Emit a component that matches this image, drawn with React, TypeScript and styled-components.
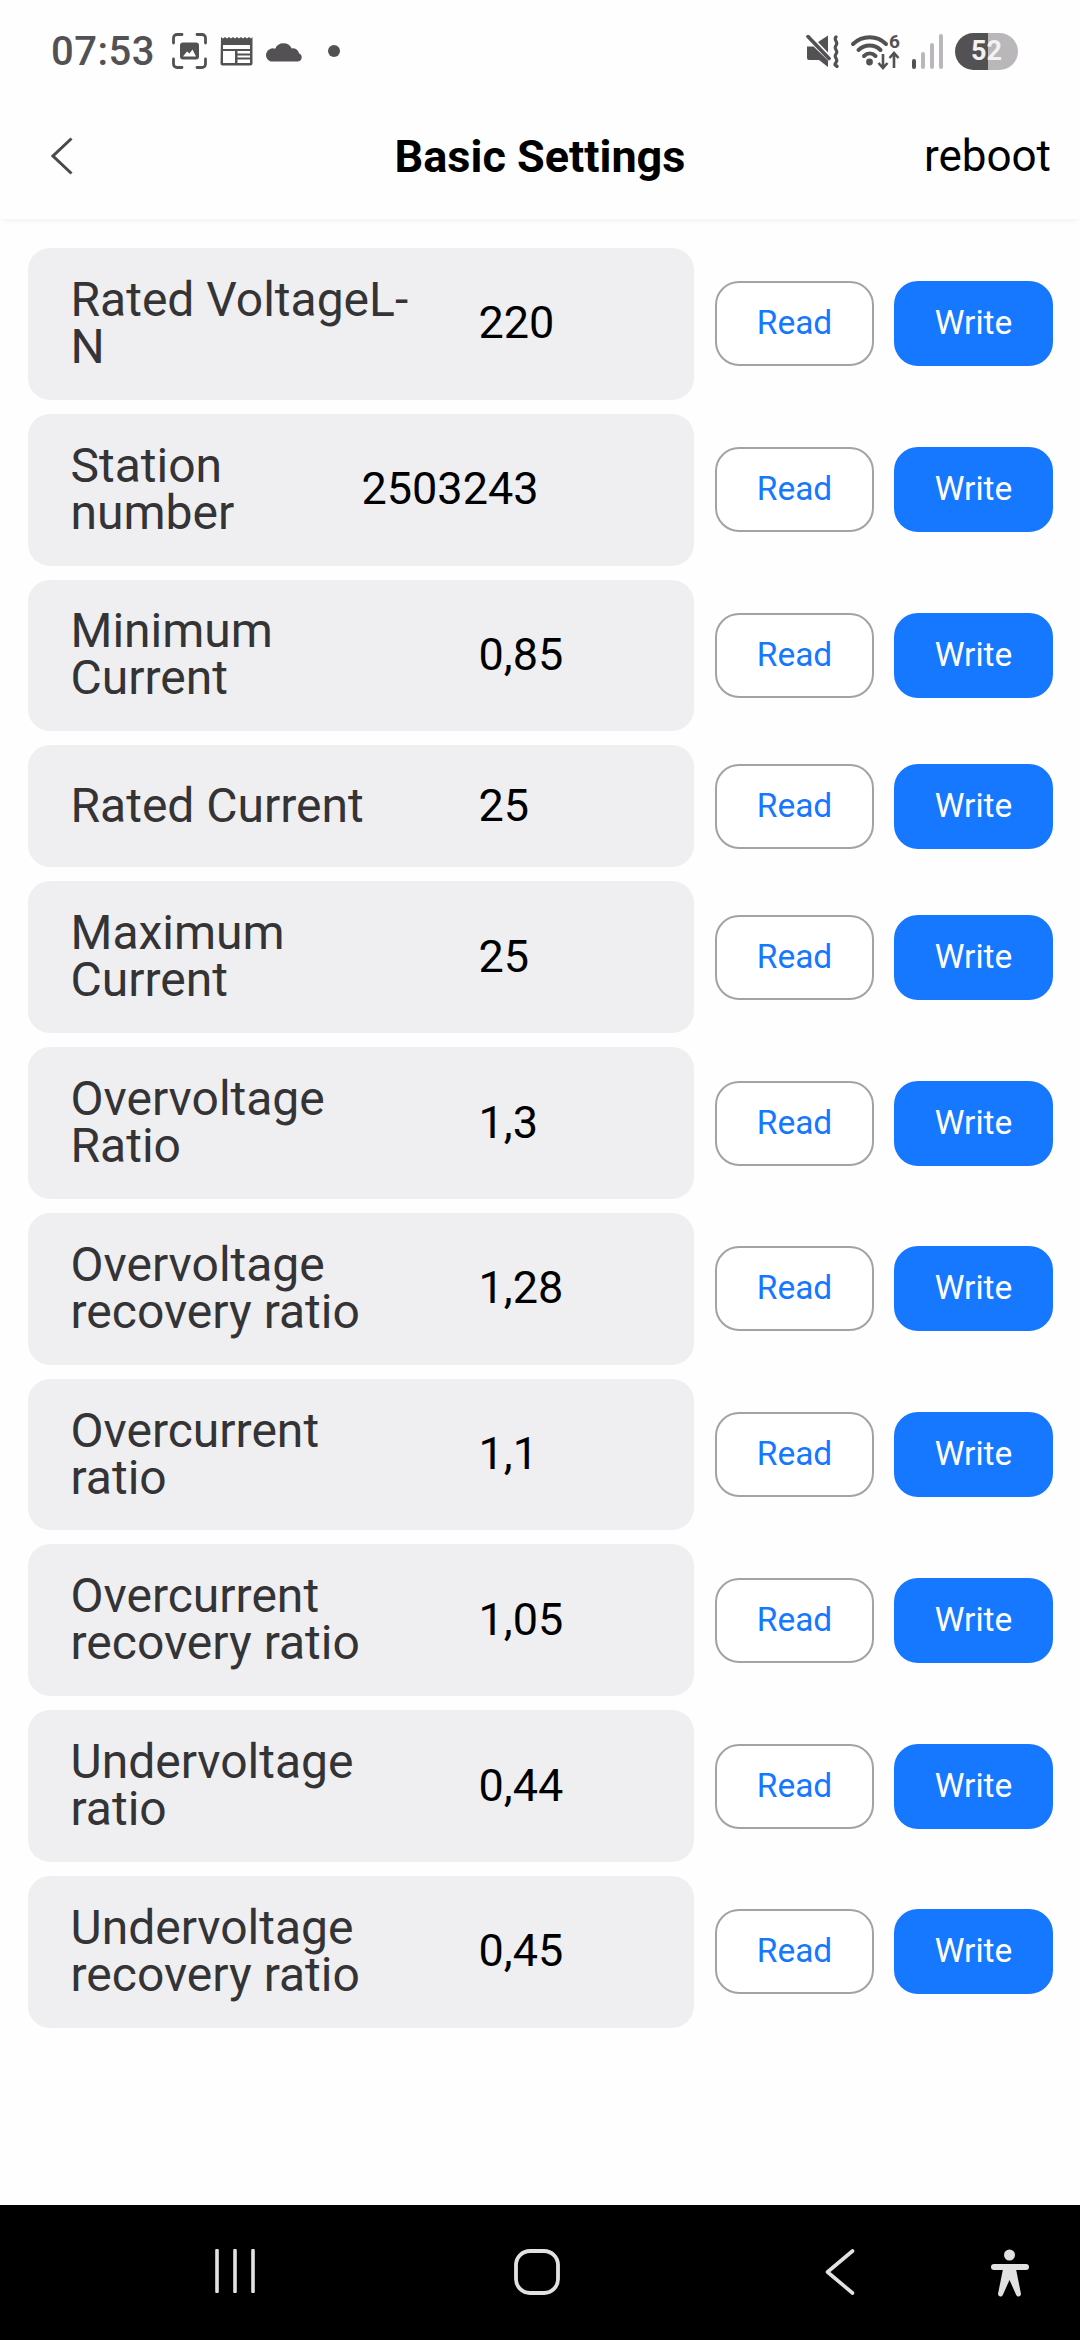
import React from "react";
import styled, { createGlobalStyle } from "styled-components";

const Global = createGlobalStyle`
  html, body { margin: 0; padding: 0; background: #fefefe; }
  * { box-sizing: border-box; }
  body { font-family: Roboto, "Noto Sans", sans-serif; }
`;

const Screen = styled.div`
  width: 1080px;
  height: 2340px;
  display: flex;
  flex-direction: column;
  background: #fefefe;
  overflow: hidden;
`;

const StatusBar = styled.div`
  height: 102px;
  flex: none;
  padding: 0 62px 0 51px;
  display: flex;
  align-items: center;
  justify-content: space-between;
  color: #535154;
`;

const StatusGroup = styled.div`
  display: flex;
  align-items: center;
`;

const Clock = styled.span`
  font-size: 40px;
  font-weight: 500;
  letter-spacing: 0.5px;
  margin-right: 17px;
`;

const Battery = styled.div`
  width: 63px;
  height: 37px;
  border-radius: 19px;
  margin-left: 12px;
  background: linear-gradient(90deg, #535154 0 33px, #b9b7ba 33px);
  color: #f2f2f2;
  font-size: 27px;
  font-weight: 700;
  line-height: 37px;
  text-align: center;
`;

const Header = styled.header`
  height: 117px;
  flex: none;
  padding: 0 29px 9px;
  display: grid;
  grid-template-columns: 1fr auto 1fr;
  align-items: center;
  background: #fefefe;
  box-shadow: 0 4px 5px -2px rgba(0, 0, 0, 0.05);
  position: relative;
`;

const BackButton = styled.div`
  display: flex;
  align-items: center;
  padding-left: 22px;
`;

const Title = styled.h1`
  margin: 0;
  font-size: 45px;
  font-weight: 700;
  color: #000;
`;

const Reboot = styled.div`
  justify-self: end;
  font-size: 44px;
  color: #000;
`;

const List = styled.main`
  flex: 1;
  padding: 29px 27px 0 28px;
  display: flex;
  flex-direction: column;
  gap: 14px;
`;

const Row = styled.div`
  display: flex;
  align-items: center;
  gap: 21px;
`;

const Field = styled.div`
  flex: none;
  width: 666px;
  min-height: 122px;
  padding: 27.9px 0 29.9px 42.5px;
  border-radius: 22px;
  background: #efeef0;
  display: flex;
  align-items: center;
`;

const Label = styled.div<{ $width: number }>`
  flex: none;
  width: ${(p) => p.$width}px;
  padding-right: ${(p) => (p.$width > 300 ? 68 : 0)}px;
  font-size: 48px;
  line-height: 47px;
  color: #343335;
`;

const Value = styled.div`
  font-size: 45px;
  line-height: 47px;
  color: #000;
`;

const Actions = styled.div`
  display: flex;
  gap: 20px;
`;

const Action = styled.button<{ $primary?: boolean }>`
  width: 159px;
  height: 85px;
  padding: 0 0 2px;
  border-radius: 24px;
  border: 2px solid ${(p) => (p.$primary ? "#1677ff" : "#a3a3a3")};
  background: ${(p) => (p.$primary ? "#1677ff" : "#fff")};
  color: ${(p) => (p.$primary ? "#fff" : "#1677ff")};
  font-family: Roboto, sans-serif;
  font-size: 33.5px;
`;

const NavBar = styled.nav`
  height: 135px;
  flex: none;
  background: #000;
  padding-top: 44px;
  display: flex;
  align-items: flex-start;
  color: #e2e2e2;
`;

const NavSlot = styled.div<{ $left: number }>`
  margin-left: ${(p) => p.$left}px;
  display: flex;
`;

const rows = [
  ["Rated VoltageL-N", "220"],
  ["Station number", "2503243", 291],
  ["Minimum Current", "0,85"],
  ["Rated Current", "25"],
  ["Maximum Current", "25"],
  ["Overvoltage Ratio", "1,3"],
  ["Overvoltage recovery ratio", "1,28"],
  ["Overcurrent ratio", "1,1"],
  ["Overcurrent recovery ratio", "1,05"],
  ["Undervoltage ratio", "0,44"],
  ["Undervoltage recovery ratio", "0,45"],
] as [string, string, number?][];

const ScanIcon = () => (
  <svg width="35" height="36" viewBox="0 0 35 36" fill="none" style={{ marginRight: 13 }}>
    <path d="M1.500 10V5a3.500 3.500 0 0 1 3.500-3.500h5M25 1.500h5A3.500 3.500 0 0 1 33.500 5v5M33.500 26v5a3.500 3.500 0 0 1-3.500 3.500h-5M10 34.500H5A3.500 3.500 0 0 1 1.500 31v-5" stroke="currentColor" strokeWidth="2.800" strokeLinecap="round" />
    <rect x="8" y="9.500" width="19" height="17" rx="3" fill="currentColor" />
    <path d="M11 23.500l4-5 2.500 2 3-4 3.500 7z" fill="#fff" />
  </svg>
);

const CalendarIcon = () => (
  <svg width="33" height="30" viewBox="0 0 33 30" style={{ marginRight: 13 }}>
    <path fillRule="evenodd" fill="currentColor" d="M1 1l2 1.500L5 1l2 1.500L9 1l2 1.500L13 1l2 1.500L17 1l2 1.500L21 1l2 1.500L25 1l2 1.500L29 1l2 1.500L32.500 1v26.500a2 2 0 0 1-2 2h-28a2 2 0 0 1-2-2zM3 9v4h27V9zM3 15v12h12V15zM17.500 15v2.500H30V15zM17.500 19.500v2H30v-2zM17.500 23.500V27H30v-3.500z" />
  </svg>
);

const CloudIcon = () => (
  <svg width="36" height="22" viewBox="0 0 36 22" style={{ marginRight: 26 }}>
    <path fill="currentColor" d="M4.500 21.500h27a4.300 4.300 0 0 0 1.500-8.300 6.200 6.200 0 0 0-7.300-4.700A9 9 0 0 0 9.200 8.700 6.800 6.800 0 0 0 4.500 21.500z" />
  </svg>
);

const Dot = styled.span`
  width: 12px;
  height: 12px;
  border-radius: 50%;
  background: currentColor;
`;

const MuteIcon = () => (
  <svg width="35" height="33" viewBox="0 0 35 33" style={{ marginRight: 10 }}>
    <path fill="currentColor" d="M1 11.500h6.500L22 25.500V32l-9-7H3a2 2 0 0 1-2-2zM12 7l10-6.500v17z" />
    <path d="M2 1.500l21 22" stroke="currentColor" strokeWidth="3.600" strokeLinecap="round" />
    <path d="M30 2c-3 3 3 5 0 8.500s3 5 0 8.500 3 5 0 8.500 1.500 3 1 4" fill="none" stroke="currentColor" strokeWidth="3.200" strokeLinecap="round" />
  </svg>
);

const WifiIcon = () => (
  <svg width="50" height="36" viewBox="0 0 50 36" style={{ marginRight: 11, overflow: "visible" }}>
    <path d="M2 11c9.500-9 24-9 33 0M7.500 17c6.500-6 16-6 22 0M13 23c3.500-3.400 8-3.400 11.500 0" fill="none" stroke="currentColor" strokeWidth="4" strokeLinecap="round" />
    <circle cx="18.500" cy="29" r="3.400" fill="currentColor" />
    <text x="38" y="15" fontFamily="Roboto, sans-serif" fontSize="19" fontWeight="700" fill="currentColor">6</text>
    <path d="M32 21v14M27.500 30l4.500 5 4.500-5M43 35V20M38.500 25l4.500-5 4.500 5" fill="none" stroke="currentColor" strokeWidth="2.600" />
  </svg>
);

const SignalIcon = () => (
  <svg width="31" height="35" viewBox="0 0 31 35">
    <rect x="0" y="25" width="4" height="10" rx="2" fill="#535154" />
    <rect x="9" y="18" width="4" height="17" rx="2" fill="#b9b7ba" />
    <rect x="18" y="9" width="4" height="26" rx="2" fill="#b9b7ba" />
    <rect x="27" y="0" width="4" height="35" rx="2" fill="#b9b7ba" />
  </svg>
);

const Chevron = () => (
  <svg width="22" height="38" viewBox="0 0 22 38" fill="none">
    <path d="M20.500 1.500L2 19l18.500 17.500" stroke="#4a4a4c" strokeWidth="3" />
  </svg>
);

const RecentsIcon = () => (
  <svg width="40" height="44" viewBox="0 0 40 44">
    <path d="M2 1.500v41M20 1.500v41M38 1.500v41" stroke="currentColor" strokeWidth="3.600" strokeLinecap="round" />
  </svg>
);

const HomeIcon = () => (
  <svg width="46" height="46" viewBox="0 0 46 46" fill="none">
    <rect x="2" y="2" width="42" height="42" rx="14" stroke="currentColor" strokeWidth="3.800" />
  </svg>
);

const NavBackIcon = () => (
  <svg width="30" height="46" viewBox="0 0 30 46" fill="none">
    <path d="M27.500 2L2.500 23l25 21" stroke="currentColor" strokeWidth="3.600" strokeLinecap="round" strokeLinejoin="round" />
  </svg>
);

const PersonIcon = () => (
  <svg width="40" height="48" viewBox="0 0 40 48">
    <circle cx="19.500" cy="6" r="5.500" fill="currentColor" />
    <rect x="1" y="15" width="38" height="6" rx="3" fill="currentColor" />
    <path fill="currentColor" d="M13 20L8 45a2.500 2.500 0 0 0 4.800 1L19.500 31l6.700 15a2.500 2.500 0 0 0 4.800-1L26 20z" />
  </svg>
);

export default function App() {
  return (
    <Screen>
      <Global />
      <StatusBar>
        <StatusGroup>
          <Clock>07:53</Clock>
          <ScanIcon />
          <CalendarIcon />
          <CloudIcon />
          <Dot />
        </StatusGroup>
        <StatusGroup>
          <MuteIcon />
          <WifiIcon />
          <SignalIcon />
          <Battery>52</Battery>
        </StatusGroup>
      </StatusBar>
      <Header>
        <BackButton>
          <Chevron />
        </BackButton>
        <Title>Basic Settings</Title>
        <Reboot>reboot</Reboot>
      </Header>
      <List>
        {rows.map(([label, value, labelWidth]) => (
          <Row key={label}>
            <Field>
              <Label $width={labelWidth ?? 408}>{label}</Label>
              <Value>{value}</Value>
            </Field>
            <Actions>
              <Action>Read</Action>
              <Action $primary>Write</Action>
            </Actions>
          </Row>
        ))}
      </List>
      <NavBar>
        <NavSlot $left={215}><RecentsIcon /></NavSlot>
        <NavSlot $left={259}><HomeIcon /></NavSlot>
        <NavSlot $left={265}><NavBackIcon /></NavSlot>
        <NavSlot $left={135}><PersonIcon /></NavSlot>
      </NavBar>
    </Screen>
  );
}
